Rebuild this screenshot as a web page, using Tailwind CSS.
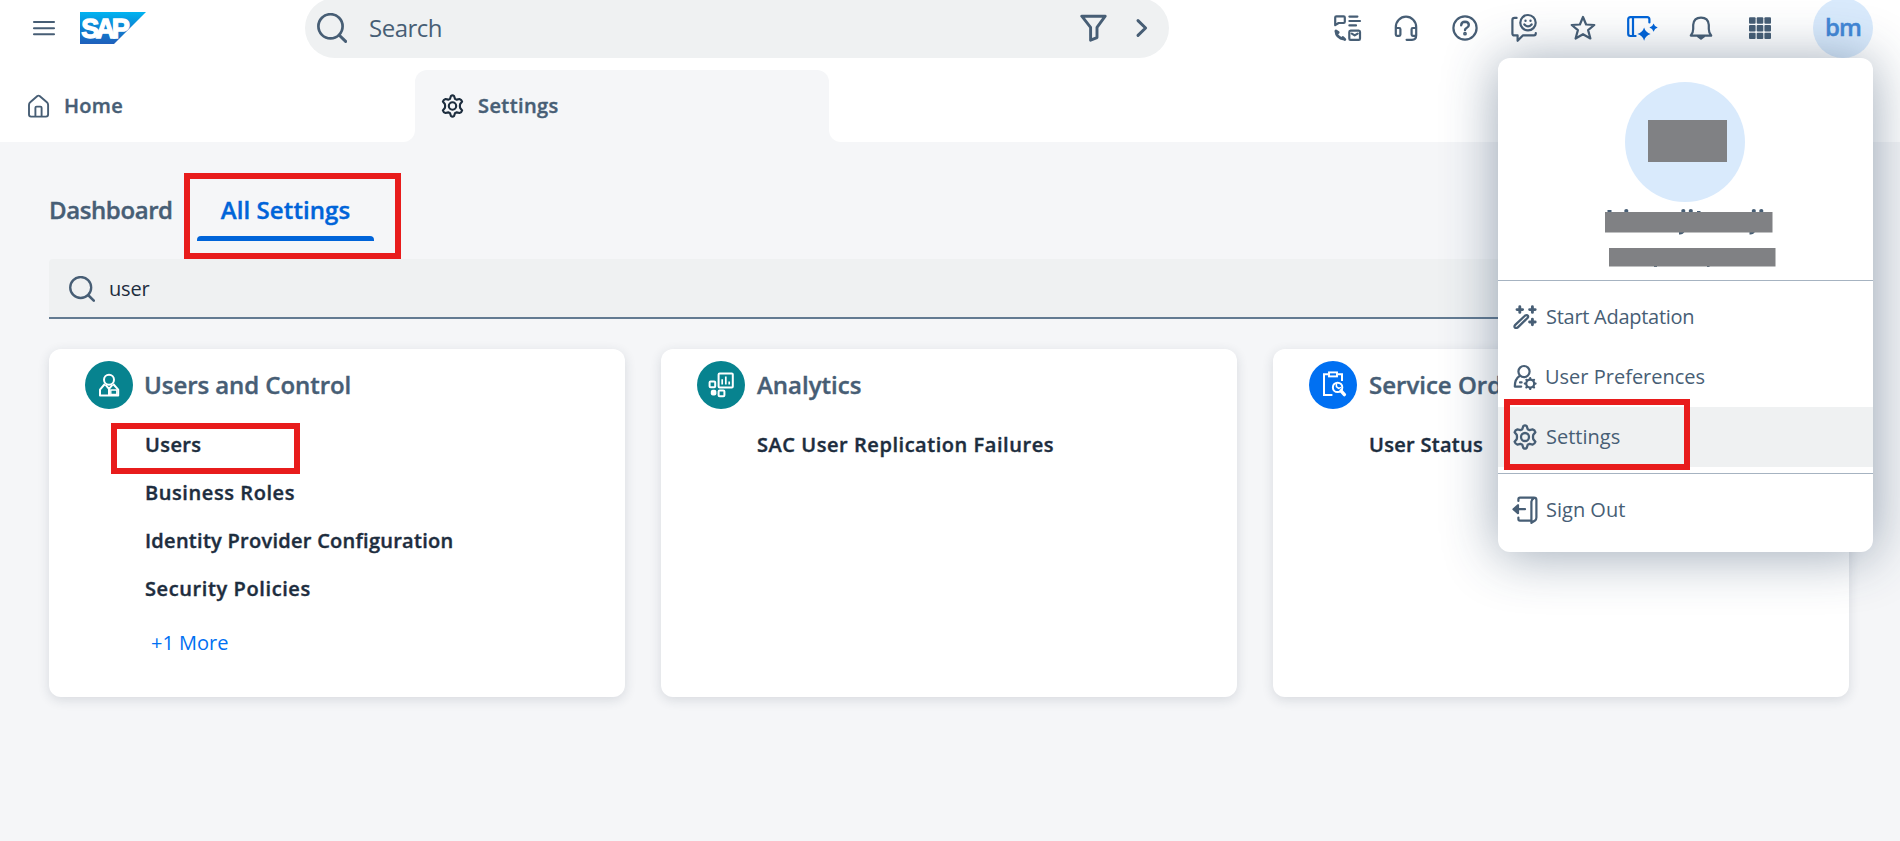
<!DOCTYPE html>
<html lang="en">
<head>
<meta charset="utf-8">
<title>Settings</title>
<script src="https://cdn.jsdelivr.net/npm/@tailwindcss/browser@4"></script>
</head>
<body class="h-[841px] overflow-hidden bg-[#f5f6f8] font-['Open_Sans','Noto_Sans',sans-serif] text-[#475e75]">
<svg class="hidden">
  <defs>
    <symbol id="gear" viewBox="0 0 24 26"><g fill="none" stroke="currentColor" stroke-width="2.3" stroke-linejoin="round"><path d="M10.3 2.2Q12 .6 13.7 2.2L14.7 5.2Q15.6 5.8 16.6 6.1L19.6 5.4Q21.8 6 22.4 8.2L20.3 10.8Q19.7 13 20.3 15.2L22.4 17.8Q21.8 20 19.6 20.6L16.6 19.9Q15.6 20.2 14.7 20.8L13.7 23.8Q12 25.4 10.3 23.8L9.3 20.8Q8.4 20.2 7.4 19.9L4.4 20.6Q2.2 20 1.6 17.8L3.7 15.2Q4.3 13 3.7 10.8L1.6 8.2Q2.2 6 4.4 5.4L7.4 6.1Q8.4 5.8 9.3 5.2Z"/><circle cx="12" cy="13" r="4"/></g></symbol>
    <symbol id="loupe" viewBox="0 0 30 30"><g fill="none" stroke="currentColor" stroke-linecap="round"><circle cx="13.5" cy="13.3" r="12.1" stroke-width="2.7"/><path d="M22.3 22.2L28.6 28.4" stroke-width="3"/></g></symbol>
  </defs>
</svg>

<header class="flex h-14 items-center bg-white">
  <svg class="ml-8 size-6" viewBox="0 0 24 24" fill="none" stroke="currentColor" stroke-width="2.1" stroke-linecap="round"><path d="M2 6h20M2 12.2h20M2 18.3h20"/></svg>
  <svg class="ml-6 h-8 w-[66px]" viewBox="0 0 66 32"><defs><linearGradient id="sap" x2="0" y2="1"><stop stop-color="#00b4f1"/><stop offset=".5" stop-color="#0d82d2"/><stop offset="1" stop-color="#1f5fbb"/></linearGradient></defs><path d="M0 0H66L34 32H0Z" fill="url(#sap)"/><text x="1.2" y="25.8" textLength="48.500" lengthAdjust="spacing" font-family="Liberation Sans" font-weight="bold" font-size="27" fill="#fff" stroke="#fff" stroke-width="1.300">SAP</text></svg>
  <div class="ml-[159px] flex h-[60px] w-[864px] shrink-0 items-center rounded-[30px] bg-[#eff1f2] pl-3">
    <svg class="size-[30px]"><use href="#loupe"/></svg>
    <span class="ml-[22px] text-2xl leading-[58px] tracking-[-0.5px]">Search</span>
    <svg class="ml-auto h-7 w-[27px]" viewBox="0 0 27 28" fill="none" stroke="currentColor" stroke-width="2.9" stroke-linejoin="round"><path d="M1.8 2.2H25.2L17 13.4V23.6L10.6 26.2V13.4Z"/></svg>
    <svg class="ml-7 mr-[20px] h-5 w-[14px]" viewBox="0 0 14 20" fill="none" stroke="currentColor" stroke-width="3" stroke-linecap="round" stroke-linejoin="round"><path d="M3 2.6L10.6 10L3 17.4"/></svg>
  </div>
  <div class="ml-[148px] flex shrink-0 items-center">
    <div class="flex w-[59px] justify-center"><svg class="size-[30px]" viewBox="0 0 30 30" fill="none" stroke="currentColor" stroke-width="2.2" stroke-linecap="round" stroke-linejoin="round"><path d="M3.200 12.200V4.600Q3.200 3.400 4.400 3.400H11.600Q12.800 3.400 12.800 4.600V8.800Q12.800 10 11.600 10H6.600ZM17.400 3.600H25.400M17.400 8H28M17.400 12.400H24M17.300 19Q17.300 17.600 18.600 17.600H26.800Q28 17.600 28 19V25.400Q28 26.800 26.800 26.800H18.600Q17.300 26.800 17.300 25.400ZM19.800 20.600L22.700 22.400L25.600 20.600"/><path stroke-width="2.800" d="M3.900 18.200Q4.400 24.900 12.200 26.200M3.900 18L6.200 19.500M10.800 24.400L12.800 26.400"/></svg></div>
    <div class="flex w-[59px] justify-center"><svg class="size-[30px]" viewBox="0 0 30 30" fill="none" stroke="currentColor" stroke-width="2.2" stroke-linecap="round" stroke-linejoin="round"><path d="M4.800 21V14.200A10.200 10.600 0 0 1 25.200 14.200V22.200Q25.200 26.800 21 26.800H15.600M4.800 15H8.200Q9.400 15 9.400 16.200V21.600Q9.400 22.800 8.200 22.800H6Q4.800 22.800 4.800 21.600ZM25.200 15H21.800Q20.600 15 20.600 16.200V21.600Q20.600 22.800 21.800 22.800H25"/></svg></div>
    <div class="flex w-[59px] justify-center"><svg class="size-[30px]" viewBox="0 0 30 30" fill="none" stroke="currentColor" stroke-width="2.2" stroke-linecap="round"><circle cx="15" cy="15" r="11.600"/><path stroke-width="2.400" d="M11.200 12.200Q11.400 8.800 15 8.800Q18.800 8.900 18.800 12Q18.800 13.800 16.800 14.800Q15 15.600 15 17"/><circle cx="15" cy="20.700" r=".8"/></svg></div>
    <div class="flex w-[59px] justify-center"><svg class="size-[30px]" viewBox="0 0 30 30" fill="none" stroke="currentColor" stroke-width="2.2" stroke-linecap="round" stroke-linejoin="round"><circle cx="19" cy="9.700" r="7.700"/><path d="M7.600 4.900H5.600Q3.400 4.900 3.400 7V20.400Q3.400 22.400 5.400 22.400H8.600V27.800L13.800 22.400H25Q26.800 22.400 26.800 20M15.400 11.400Q19 15.300 22.600 11.400"/><path stroke-width="2.400" d="M16.500 7.800h.01M21.500 7.800h.01"/></svg></div>
    <div class="flex w-[59px] justify-center"><svg class="size-[30px]" viewBox="0 0 30 30" fill="none" stroke="currentColor" stroke-width="2.2" stroke-linejoin="round"><path d="M15 4L18.100 11.500L26.300 12L20.100 17.100L22.400 25.500L15 21.200L7.600 25.500L9.900 17.100L3.700 12L11.900 11.500Z"/></svg></div>
    <div class="flex w-[59px] justify-center text-[#0064d9]"><svg class="h-[30px] w-8" viewBox="0 0 32 30" fill="none" stroke="currentColor" stroke-width="2.2" stroke-linecap="round" stroke-linejoin="round"><path d="M23.400 9.400V6.400Q23.400 4.200 21.200 4.200H4.400Q2.200 4.200 2.200 6.400V20.800Q2.200 23 4.400 23H9.600M7 4.400V22.800"/><path fill="currentColor" stroke="none" d="M18.100 14.600Q19.500 19.500 24.600 21.100Q19.500 22.700 18.100 27.700Q16.700 22.700 11.400 21.100Q16.700 19.500 18.100 14.600ZM27.600 10.400Q28.500 13.600 31.700 14.600Q28.500 15.600 27.600 18.800Q26.600 15.600 23.400 14.600Q26.600 13.600 27.600 10.400Z"/></svg></div>
    <div class="flex w-[59px] justify-center"><svg class="size-[30px]" viewBox="0 0 30 30" fill="none" stroke="currentColor" stroke-width="2.2" stroke-linejoin="round"><path d="M4.800 22.600Q7.200 20 7.200 16V11.800Q7.800 4.600 15 4.600Q22.200 4.600 22.800 11.800V16Q22.800 20 25.200 22.600Z"/><path d="M12 23.400H18L15 25.600Z" fill="currentColor"/></svg></div>
    <div class="flex w-[59px] justify-center"><svg class="size-[30px]" viewBox="0 0 30 30" fill="currentColor"><rect x="4" y="4.300" width="6.600" height="6.400" rx="1"/><rect x="11.700" y="4.300" width="6.600" height="6.400" rx="1"/><rect x="19.400" y="4.300" width="6.600" height="6.400" rx="1"/><rect x="4" y="12" width="6.600" height="6.400" rx="1"/><rect x="11.700" y="12" width="6.600" height="6.400" rx="1"/><rect x="19.400" y="12" width="6.600" height="6.400" rx="1"/><rect x="4" y="19.700" width="6.600" height="6.400" rx="1"/><rect x="11.700" y="19.700" width="6.600" height="6.400" rx="1"/><rect x="19.400" y="19.700" width="6.600" height="6.400" rx="1"/></svg></div>
    <div class="ml-[24px] flex size-[60px] items-center justify-center rounded-full bg-[#d9eafc] pb-0.5 text-2xl font-semibold tracking-[-0.9px] text-[#4287d6] [-webkit-text-stroke:0.4px]">bm</div>
  </div>
</header>

<nav class="flex h-[86px] bg-white pt-[14px] text-xl font-semibold [-webkit-text-stroke:0.4px]">
  <div class="w-[415px] bg-gradient-to-b from-white from-50% to-[#f5f6f8] to-50%">
    <div class="flex h-full items-center rounded-br-xl bg-white pl-[27px]">
      <svg class="size-6" viewBox="0 0 24 24" fill="none" stroke="currentColor" stroke-width="1.900" stroke-linejoin="round"><path d="M2 11Q2 9.300 3.200 8.300L10.400 2Q11.500 1.200 12.600 2L19.900 8.300Q21.100 9.300 21.100 11V20.600Q21.100 22.600 19 22.600H4Q2 22.600 2 20.600ZM8.400 22.400V13.800Q8.400 12.600 9.600 12.600H13.400Q14.600 12.600 14.600 13.800V22.400"/></svg>
      <span class="ml-[13px] tracking-[0.3px]">Home</span>
    </div>
  </div>
  <div class="flex w-[414px] items-center rounded-t-xl bg-[#f5f6f8] pl-[26px]">
    <svg class="h-6 w-[23px] text-[#1d2d3e]"><use href="#gear"/></svg>
    <span class="ml-[14px] tracking-[0.400px]">Settings</span>
  </div>
  <div class="flex-1 bg-gradient-to-b from-white from-50% to-[#f5f6f8] to-50%"><div class="h-full rounded-bl-xl bg-white"></div></div>
</nav>

<main class="px-[49px] pt-8">
  <div class="relative flex h-[67px] text-2xl font-semibold leading-[72px] [-webkit-text-stroke:0.4px]">
    <span class="w-[148px] tracking-[-0.400px]">Dashboard</span>
    <div class="w-[177px] text-center tracking-[0.100px] text-[#0064d9]">All Settings</div>
    <div class="absolute left-[148px] top-[62px] h-[5px] w-[177px] rounded-t bg-[#0064d9]"></div>
    <div class="absolute -top-px left-[135px] h-[86px] w-[217px] border-6 border-[#e81c1c]"></div>
  </div>
  <div class="mt-[18px] flex h-[60px] w-[1800px] items-center rounded-t border-b-2 border-[#637b92] bg-[#eff1f2] pl-5 pt-0.5 text-xl text-[#1d2d3e]">
    <svg class="size-[26px] text-[#475e75]"><use href="#loupe"/></svg>
    <span class="ml-[14px] tracking-[-0.200px]">user</span>
  </div>
  <div class="mt-[30px] grid w-[1800px] grid-cols-3 gap-9 text-xl font-semibold text-[#1d2d3e] [-webkit-text-stroke:0.4px]">
    <section class="relative h-[348px] rounded-xl bg-white pl-9 pt-3 shadow-[0_3px_12px_rgba(34,53,72,0.14)]">
      <div class="flex h-12 items-center text-2xl text-[#475e75]">
        <svg class="size-12" viewBox="0 0 48 48"><circle cx="24" cy="24" r="24" fill="#07838f"/><g fill="none" stroke="#fff" stroke-width="2" stroke-linejoin="round"><circle cx="24" cy="18.800" r="5"/><path d="M19.800 23L15 28.600V34.400H33.200V28.600L28.200 23M20.600 23.800L24 27.800L27.400 23.800M24 28V34"/></g><path d="M25.800 29h6v4.400h-6Z" fill="none" stroke="#fff" stroke-width="1.400"/></svg>
        <span class="ml-[11px] pb-px tracking-[-0.060px]">Users and Control</span>
      </div>
      <ul class="ml-[60px] mt-3 leading-[48px]">
        <li class="tracking-[0.400px]">Users</li>
        <li class="tracking-[0.580px]">Business Roles</li>
        <li class="tracking-[0.270px]">Identity Provider Configuration</li>
        <li class="tracking-[0.600px]">Security Policies</li>
      </ul>
      <a class="ml-[66px] mt-[5px] block font-normal leading-[50px] text-[#0070f2] [-webkit-text-stroke:0px]">+1 More</a>
      <div class="absolute left-[62px] top-[74px] h-[51px] w-[189px] border-6 border-[#e81c1c]"></div>
    </section>
    <section class="h-[348px] rounded-xl bg-white pl-9 pt-3 shadow-[0_3px_12px_rgba(34,53,72,0.14)]">
      <div class="flex h-12 items-center text-2xl text-[#475e75]">
        <svg class="size-12" viewBox="0 0 48 48"><circle cx="24" cy="24" r="24" fill="#07838f"/><g fill="none" stroke="#fff" stroke-width="2"><rect x="21.600" y="12.400" width="14.200" height="14.200" rx="1"/><rect x="12.600" y="20.400" width="5.600" height="5.800" rx="1"/><rect x="21.600" y="29.600" width="5.800" height="5.600" rx="1"/><path d="M25.200 18.200V23.600M28.800 15.400V23.600M32.200 20.600V23.600" stroke-width="1.700"/></g><rect x="13.800" y="28.800" width="5.600" height="5.600" rx="2" fill="#fff"/></svg>
        <span class="ml-[12px] pb-px">Analytics</span>
      </div>
      <ul class="ml-[60px] mt-3 leading-[48px] tracking-[0.550px]"><li>SAC User Replication Failures</li></ul>
    </section>
    <section class="h-[348px] rounded-xl bg-white pl-9 pt-3 shadow-[0_3px_12px_rgba(34,53,72,0.14)]">
      <div class="flex h-12 items-center text-2xl text-[#475e75]">
        <svg class="size-12" viewBox="0 0 48 48"><circle cx="24" cy="24" r="24" fill="#0070f2"/><path d="M19 13.200H15V34H23.400M29 13.200H33V20" fill="none" stroke="#fff" stroke-width="2"/><rect x="20" y="11.400" width="8" height="4" fill="none" stroke="#fff" stroke-width="1.900"/><circle cx="28.600" cy="26.400" r="4.700" fill="none" stroke="#fff" stroke-width="2"/><path d="M27.400 22.600V25.600L29.600 27.400L32 26.400" fill="none" stroke="#fff" stroke-width="1.500"/><path d="M32 29.800L35.400 33.600" stroke="#fff" stroke-width="3.400" stroke-linecap="round"/></svg>
        <span class="ml-[12px] pb-px">Service Orders</span>
      </div>
      <ul class="ml-[60px] mt-3 leading-[48px] tracking-[0.300px]"><li>User Status</li></ul>
    </section>
  </div>
</main>

<aside class="absolute left-[1498px] top-[58px] h-[494px] w-[375px] rounded-xl bg-white text-xl shadow-[0_3px_54px_rgba(34,60,92,0.45)]">
  <div class="relative h-[223px] border-b border-[#a6b3c1] pt-6">
    <div class="ml-[127px] size-[120px] rounded-full bg-[#d9eafc] pl-[23px] pt-[38px]"><div class="h-[42px] w-[79px] bg-[#808184]"></div></div>
    <svg class="absolute left-0 top-[140px] h-20 w-[375px]" viewBox="0 0 375 80"><g fill="#475e75"><rect x="109.500" y="12" width="4" height="5"/><circle cx="128.300" cy="13" r="2.100"/><circle cx="185.300" cy="13" r="2.100"/><circle cx="192.800" cy="13" r="2.100"/><rect x="199" y="13" width="3.500" height="3"/><circle cx="255.800" cy="13" r="2.100"/><circle cx="263.300" cy="13" r="2.100"/><path d="M181 33H187Q185 37 181 36.500ZM251.500 33H257.500Q255.500 37 251.500 36.500ZM156 67h3v2h-3ZM209 67h2.500v2H209Z"/></g><path d="M107 14h167.500v20.500H107ZM111 50h166.500v18.500H111Z" fill="#808184"/></svg>
  </div>
  <div class="mt-[6px] flex h-[60px] items-center pl-[15px]">
    <svg class="h-6 w-6" viewBox="0 0 24 24" fill="none" stroke="currentColor" stroke-linejoin="round"><path d="M2 20.200L12.200 10.500Q14 9.500 15 11Q15.500 12 14.500 13L4.600 22.600Q3 23.500 1.900 22.600Q1 21.500 2 20.200Z" stroke-width="2.300"/><path d="M6.800 1.800V7.400M4 4.600H9.600M19.400 1.800V7.400M16.600 4.600H22.200M19.400 14.200V19.800M16.600 17H22.200" stroke-width="2.900" stroke-linecap="round"/></svg>
    <span class="ml-[9px] tracking-[-0.270px]">Start Adaptation</span>
  </div>
  <div class="flex h-[60px] items-center pl-[15px]">
    <svg class="h-[26px] w-6" viewBox="0 0 24 26" fill="none" stroke="currentColor" stroke-width="2.200" stroke-linecap="round" stroke-linejoin="round"><circle cx="11" cy="7.600" r="5.600"/><path d="M6.600 12Q1.800 15 1.800 22.600H8.200M7 18.400H8.600"/><circle cx="17.200" cy="19.600" r="4"/><path d="M17.200 14.200V15M17.200 24.200V25M11.800 19.600H12.600M21.800 19.600H22.600M13.400 15.800L14 16.400M20.400 22.800L21 23.400M13.400 23.400L14 22.800M20.400 16.400L21 15.800"/></svg>
    <span class="ml-[8px]">User Preferences</span>
  </div>
  <div class="relative flex h-[60px] items-center bg-[#eff1f2] pl-[15px]">
    <svg class="h-[26px] w-6"><use href="#gear"/></svg>
    <span class="ml-[9px]">Settings</span>
    <div class="absolute -top-2 left-[6px] h-[71px] w-[186px] border-6 border-[#e81c1c]"></div>
  </div>
  <div class="mt-[6px] border-t border-[#a6b3c1]"></div>
  <div class="mt-[6px] flex h-[60px] items-center pl-[14px]">
    <svg class="h-7 w-[26px]" viewBox="0 0 26 28" fill="none" stroke="currentColor" stroke-width="2.200" stroke-linecap="round" stroke-linejoin="round"><path d="M6.400 5V3.400Q6.400 1.700 8 1.700H22Q24.400 1.700 24.400 4V21.500Q24.400 23.500 23 24.500L19.400 26.800V5.600Q19.600 3.600 22 2M6.400 21.500V23Q6.400 24.600 8 24.600H19M2 13.200H13"/><path d="M6 9.200V17.200L1.500 13.200Z" fill="currentColor"/></svg>
    <span class="ml-[8px]">Sign Out</span>
  </div>
</aside>
</body>
</html>
